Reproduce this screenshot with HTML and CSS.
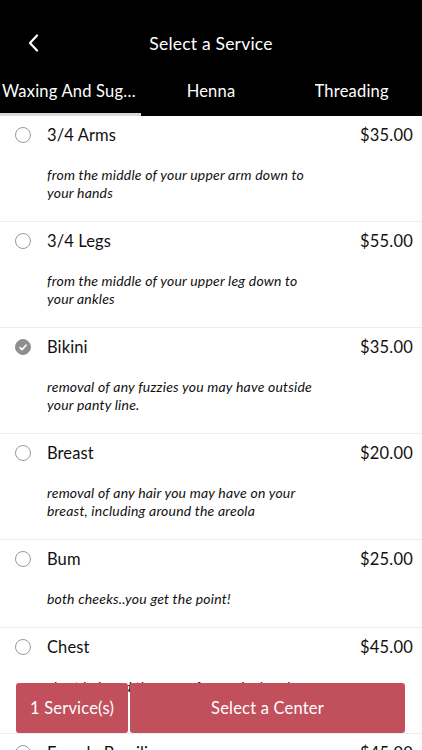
FILE: index.html
```html
<!DOCTYPE html>
<html>
<head>
<meta charset="utf-8">
<link rel="stylesheet" href="styles.css">
</head>
<body>
<div class="screen">
  <header class="top">
    <div class="nav">
      <svg class="back" width="12" height="18" viewBox="0 0 12 18"><path d="M10 1.5 L3 9 L10 16.5" fill="none" stroke="#fff" stroke-width="2.2" stroke-linecap="round" stroke-linejoin="round"/></svg>
      <div class="title">Select a Service</div>
    </div>
    <div class="tabs">
      <div class="tab active"><span>Waxing And Sugaring</span></div>
      <div class="tab"><span>Henna</span></div>
      <div class="tab"><span>Threading</span></div>
    </div>
  </header>
  <main class="list">
    <div class="item">
      <div class="row"><span class="radio"></span><span class="name">3/4 Arms</span><span class="price">$35.00</span></div>
      <p class="desc">from the middle of your upper arm down to your hands</p>
    </div>
    <div class="item">
      <div class="row"><span class="radio"></span><span class="name">3/4 Legs</span><span class="price">$55.00</span></div>
      <p class="desc">from the middle of your upper leg down to your ankles</p>
    </div>
    <div class="item">
      <div class="row"><span class="radio checked"><svg width="8" height="7" viewBox="0 0 8 7"><path d="M1 3.6 L3 5.6 L7 1.2" fill="none" stroke="#fff" stroke-width="1.6" stroke-linecap="round" stroke-linejoin="round"/></svg></span><span class="name">Bikini</span><span class="price">$35.00</span></div>
      <p class="desc">removal of any fuzzies you may have outside your panty line.</p>
    </div>
    <div class="item">
      <div class="row"><span class="radio"></span><span class="name">Breast</span><span class="price">$20.00</span></div>
      <p class="desc">removal of any hair you may have on your breast, including around the areola</p>
    </div>
    <div class="item">
      <div class="row"><span class="radio"></span><span class="name">Bum</span><span class="price">$25.00</span></div>
      <p class="desc">both cheeks..you get the point!</p>
    </div>
    <div class="item">
      <div class="row"><span class="radio"></span><span class="name">Chest</span><span class="price">$45.00</span></div>
      <p class="desc">chest hair and the area of your nipples, down to your belly</p>
    </div>
    <div class="item">
      <div class="row"><span class="radio"></span><span class="name">Female Brazilian</span><span class="price">$45.00</span></div>
      <p class="desc">everything, front to back</p>
    </div>
  </main>
  <div class="actions">
    <button class="btn count">1 Service(s)</button>
    <button class="btn center">Select a Center</button>
  </div>
</div>
</body>
</html>
```
FILE: styles.css
```css
* { box-sizing: border-box; }
html, body { margin: 0; padding: 0; }
body {
  font-family: Lato, "Open Sans", "DejaVu Sans", sans-serif;
  background: #fff;
  color: #111;
}
.screen {
  position: relative;
  width: 422px;
  height: 750px;
  overflow: hidden;
}
.top {
  background: #000;
  color: #fff;
  padding-top: 20px;
}
.nav {
  height: 46px;
  display: flex;
  align-items: center;
  justify-content: center;
  position: relative;
}
.back {
  position: absolute;
  left: 27px;
  top: 14px;
}
.title {
  font-size: 17.5px;
  letter-spacing: 0.2px;
}
.tabs {
  display: grid;
  grid-template-columns: repeat(3, 1fr);
  height: 50px;
}
.tab {
  display: flex;
  align-items: center;
  justify-content: center;
  font-size: 16.5px;
  letter-spacing: 0.2px;
  padding: 3px 2px 0;
  border-bottom: 3px solid transparent;
  min-width: 0;
}
.tab span {
  white-space: nowrap;
  overflow: hidden;
  text-overflow: ellipsis;
  max-width: 100%;
}
.tab.active {
  border-bottom-color: #d8d8d8;
  justify-content: flex-start;
}
.list {
  display: flex;
  flex-direction: column;
}
.item {
  padding: 8px 9px 19px 0;
  border-bottom: 1px solid #eeeeee;
}
.row {
  display: flex;
  align-items: center;
  height: 22px;
}
.radio {
  width: 16px;
  height: 16px;
  border: 1px solid #9a9a9a;
  border-radius: 50%;
  margin-left: 15px;
  margin-right: 16px;
  flex: none;
  display: flex;
  align-items: center;
  justify-content: center;
}
.radio.checked {
  background: #8e8e8e;
  border-color: #8e8e8e;
}
.name {
  flex: 1;
  font-size: 16.5px;
  letter-spacing: 0.1px;
}
.price {
  font-size: 16.5px;
  letter-spacing: 0.2px;
}
.desc {
  margin: 20px 0 0 47px;
  max-width: 272px;
  font-size: 14px;
  line-height: 18px;
  font-style: italic;
  letter-spacing: 0.2px;
}
.actions {
  position: absolute;
  left: 16px;
  top: 683px;
  width: 389px;
  height: 50px;
  display: flex;
  gap: 2px;
}
.btn {
  border: none;
  background: #c24f5c;
  color: #fff;
  font-family: inherit;
  font-size: 16.5px;
  letter-spacing: 0.2px;
  border-radius: 3px;
  height: 100%;
  padding: 0;
}
.btn.count { width: 112px; }
.btn.center { flex: 1; }
```
